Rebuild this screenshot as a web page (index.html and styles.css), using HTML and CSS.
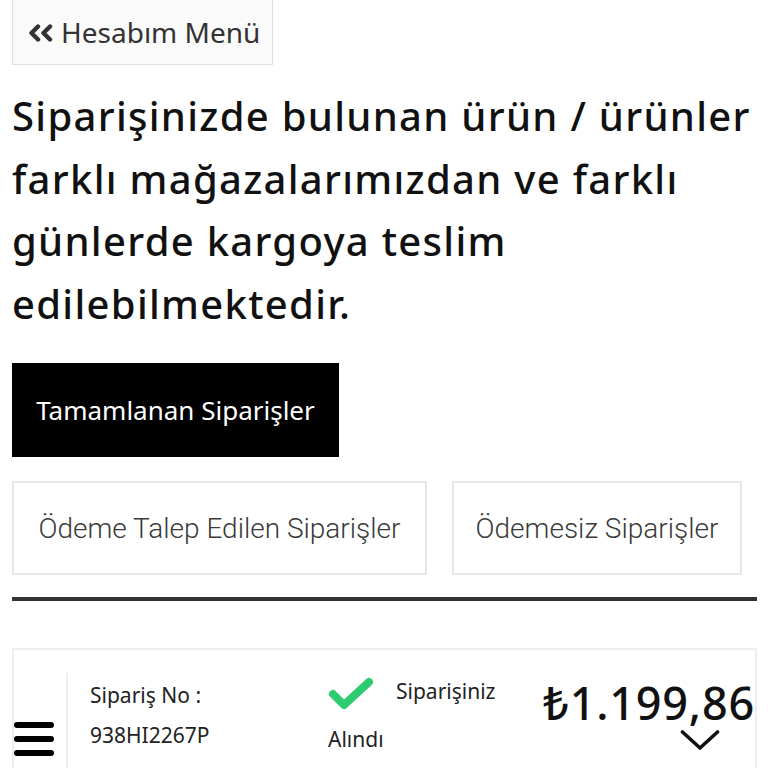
FILE: index.html
```html
<!DOCTYPE html>
<html lang="tr">
<head>
    <meta charset="UTF-8">
    <meta name="viewport" content="width=device-width, initial-scale=1.0">
    <title>Siparişlerim</title>
    <link rel="stylesheet" href="styles.css">
</head>
<body>

<div class="page">
    <a class="back-button" href="#">
        <svg class="back-icon" viewBox="0 0 26 18" width="26" height="18">
            <path d="M10 2.5 L3.5 9 L10 15.5 M22 2.5 L15.5 9 L22 15.5" fill="none" stroke="#333" stroke-width="4.4" stroke-linecap="round" stroke-linejoin="round"/>
        </svg>
        Hesabım Menü
    </a>

    <h1 class="info-text">Siparişinizde bulunan ürün / ürünler farklı mağazalarımızdan ve farklı günlerde kargoya teslim edilebilmektedir.</h1>

    <div class="tabs">
        <button class="tab active">Tamamlanan Siparişler</button>
        <div class="tab-row">
            <button class="tab tab-wide">Ödeme Talep Edilen Siparişler</button>
            <button class="tab tab-narrow">Ödemesiz Siparişler</button>
        </div>
    </div>

    <hr class="divider">

    <div class="order-card">
        <div class="order-menu">
            <span></span><span></span><span></span>
        </div>
        <div class="order-body">
            <div class="order-no">
                <div>Sipariş No :</div>
                <div>938HI2267P</div>
            </div>
            <div class="order-status">
                <div class="status-top">
                    <svg class="check-icon" viewBox="0 0 46 34" width="46" height="34">
                        <path d="M5 17 L16 28 L41 5" fill="none" stroke="#2ecc71" stroke-width="8" stroke-linecap="round" stroke-linejoin="round"/>
                    </svg>
                    <span>Siparişiniz</span>
                </div>
                <div class="status-bottom">Alındı</div>
            </div>
            <div class="order-price">
                <div class="price">₺1.199,86</div>
                <svg class="chevron" viewBox="0 0 40 22" width="40" height="22">
                    <path d="M2.5 3 L20 19 L37.5 3" fill="none" stroke="#111" stroke-width="3.6" stroke-linecap="round" stroke-linejoin="round"/>
                </svg>
            </div>
        </div>
    </div>
</div>

</body>
</html>
```

FILE: styles.css
```css
body {
    font-family: "Noto Sans", Arial, sans-serif;
    background-color: #fff;
    color: #111;
    margin: 0;
}

.page {
    padding: 0 11px 0 12px;
}

.back-button {
    display: inline-flex;
    align-items: center;
    gap: 7px;
    height: 65px;
    padding: 0 12px 0 15px;
    box-sizing: border-box;
    background-color: #fafafa;
    border: 1px solid #e0e0e0;
    border-top: none;
    color: #333;
    font-size: 28px;
    text-decoration: none;
}

.back-icon {
    margin-top: 2px;
}

.info-text {
    margin: 20px 0 0;
    font-size: 40px;
    font-weight: 500;
    letter-spacing: 1.3px;
    line-height: 62.5px;
    color: #111;
}

.tabs {
    margin-top: 28px;
}

.tab {
    height: 94px;
    padding: 0;
    font-family: "Noto Sans", Arial, sans-serif;
    font-size: 26px;
    color: #333;
    background-color: #fff;
    border: 2px solid #e8e8e8;
    cursor: pointer;
}

.tab.active {
    width: 327px;
    background-color: #000;
    border-color: #000;
    color: #fff;
}

.tab-row {
    display: flex;
    gap: 25px;
    margin-top: 24px;
}

.tab-row .tab {
    font-family: "Roboto", Arial, sans-serif;
    font-weight: 300;
    font-size: 28px;
    color: #3a3a3a;
}

.tab-wide {
    width: 415px;
}

.tab-narrow {
    width: 290px;
}

.divider {
    margin: 22px 0 0;
    border: none;
    height: 4px;
    background-color: #333;
}

.order-card {
    display: flex;
    margin-top: 47px;
    height: 140px;
    border: 2px solid #eee;
    border-bottom: none;
}

.order-menu {
    display: flex;
    flex-direction: column;
    gap: 8px;
    width: 52px;
    padding-top: 72px;
    box-sizing: border-box;
}

.order-menu span {
    display: block;
    width: 40px;
    height: 6px;
    border-radius: 3px;
    background-color: #000;
}

.order-body {
    display: flex;
    flex: 1;
    margin-top: 23px;
    border-left: 2px solid #eee;
    padding-left: 22px;
}

.order-no {
    width: 238px;
    font-size: 21px;
    line-height: 40px;
    padding-top: 2px;
    color: #222;
}

.order-status {
    width: 214px;
    font-size: 21px;
    color: #222;
}

.status-top {
    display: flex;
    align-items: flex-start;
    gap: 22px;
    height: 46px;
}

.status-top span {
    line-height: 40px;
    margin-top: -2px;
}

.check-icon {
    margin-top: 4px;
}

.status-bottom {
    line-height: 40px;
}

.order-price {
    display: flex;
    flex-direction: column;
    align-items: flex-end;
    flex: 1;
}

.price {
    font-size: 45px;
    font-weight: 500;
    letter-spacing: 0.8px;
    color: #111;
    line-height: 64px;
    margin-top: -2px;
    margin-right: 0;
}

.chevron {
    margin-right: 35px;
    margin-top: -6px;
}
```
